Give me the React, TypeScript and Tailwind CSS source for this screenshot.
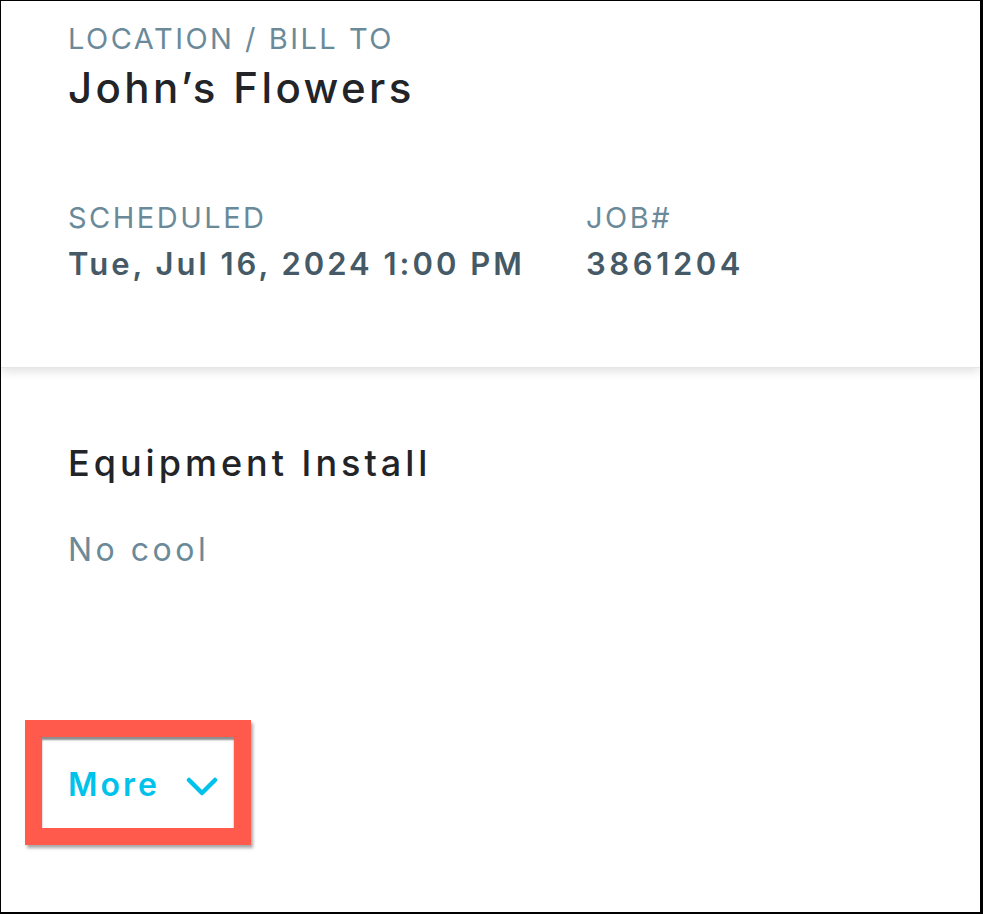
// Work order summary — header card with location/schedule, then the job details
const font = { fontFamily: 'Inter, "Open Sans", sans-serif' };

function Field({
  label,
  value,
  width,
  tracking,
}: {
  label: string;
  value: string;
  width?: string;
  tracking: string;
}) {
  return (
    <div className={width}>
      <p className="text-[29px] leading-[34px] text-[#6b8a99] tracking-[2.5px]">{label}</p>
      <p className={`mt-[11px] text-[31px] leading-[36px] font-semibold text-[#455a66] ${tracking}`}>{value}</p>
    </div>
  );
}

export default function App() {
  return (
    <div
      className="w-[983px] h-[914px] bg-white border-l border-t border-r-[3px] border-b-2 border-black flex flex-col overflow-hidden"
      style={font}
    >
      {/* Header card */}
      <section className="h-[367px] shrink-0 pl-[67px] pt-[21px] shadow-[0_3px_10px_rgba(0,0,0,0.13)] relative z-10 border-b border-[#e6e6e6]">
        <p className="text-[29px] leading-[34px] text-[#6b8a99] tracking-[2.5px]">LOCATION / BILL TO</p>
        <h1 className="mt-[9px] text-[42px] leading-[46px] font-medium text-[#222428] tracking-[3.4px]">John’s Flowers</h1>
        <div className="mt-[90px] flex">
          <Field label="SCHEDULED" value="Tue, Jul 16, 2024 1:00 PM" width="w-[518px]" tracking="tracking-[3px]" />
          <Field label="JOB#" value="3861204" tracking="tracking-[3.6px]" />
        </div>
      </section>

      {/* Job details */}
      <section className="flex-1 pl-[67px] pt-[75px]">
        <h2 className="text-[36px] leading-[40px] font-medium text-[#222428] tracking-[4px]">Equipment Install</h2>
        <p className="mt-[49px] text-[32px] leading-[36px] text-[#6b8a99] tracking-[3.5px]">No cool</p>

        <div className="mt-[152px] -ml-[43px] w-[226px] h-[125px] border-[17px] border-[#ff5a4c] shadow-[2px_3px_3px_rgba(0,0,0,0.35),inset_0_3px_2px_rgba(0,0,0,0.45)] flex items-center">
          <button className="pl-[26px] pt-[4px] flex items-center gap-[26px] text-[#00c2ea]">
            <span className="text-[32px] leading-[36px] font-semibold tracking-[3px]">More</span>
            <svg width="32" height="22" viewBox="0 0 32 22" fill="none" className="mt-[4px]">
              <path d="M3 4 L16 17 L29 4" stroke="currentColor" strokeWidth="4.5" strokeLinecap="round" strokeLinejoin="round" />
            </svg>
          </button>
        </div>
      </section>
    </div>
  );
}
